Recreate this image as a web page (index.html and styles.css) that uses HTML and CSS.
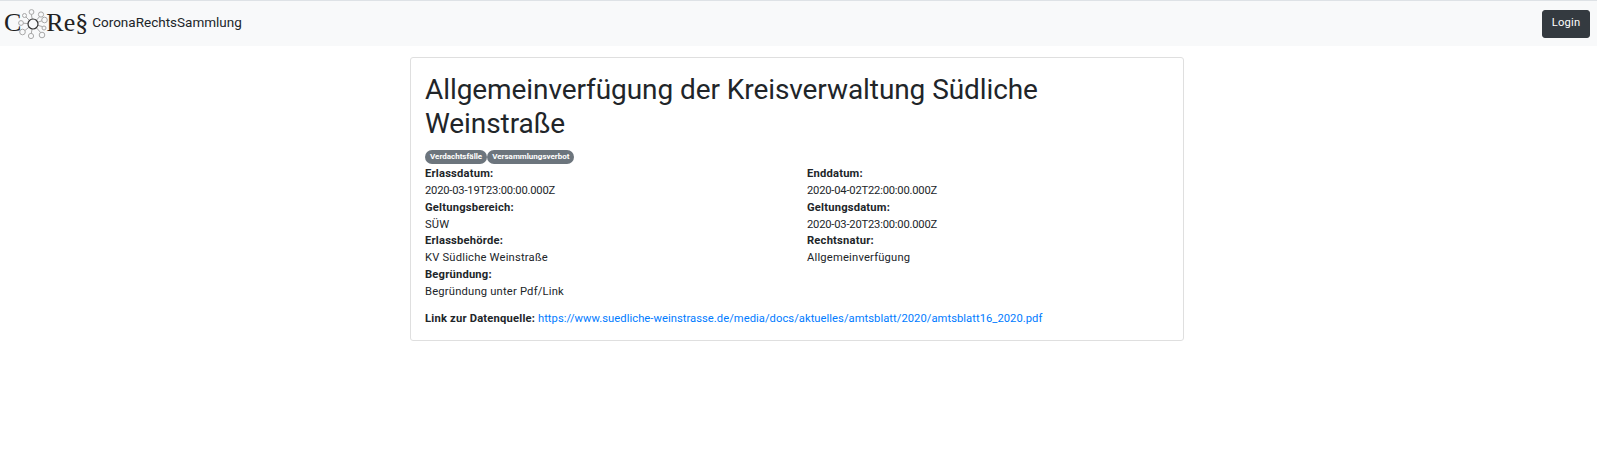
FILE: index.html
```html
<!DOCTYPE html>
<html lang="de">
<head>
<meta charset="utf-8">
<title>CoReS</title>
<link rel="stylesheet" href="styles.css">
</head>
<body>
<nav class="navbar">
  <a class="brand" href="#">
    <span class="logo">C<svg class="logo-net" viewBox="0 0 30 30" width="30" height="30" aria-hidden="true"><g fill="none" stroke="#a8a8a8" stroke-width="1"><path d="M15 15 3 14M15 15 7 7M15 15 13 3M15 15l8-9M15 15l11-4M15 15l11 3M15 15l9 10M15 15l-2 11M15 15 5 23"/><g fill="#f8f9fa"><circle cx="3" cy="14" r="2.4"/><circle cx="6.5" cy="6.5" r="2"/><circle cx="13.5" cy="3" r="2.4"/><circle cx="23" cy="5.5" r="2.6"/><circle cx="26.5" cy="11" r="2.8"/><circle cx="26" cy="19" r="2"/><circle cx="24" cy="26" r="2.8"/><circle cx="13" cy="27" r="2.6"/><circle cx="4.5" cy="23" r="2.8"/></g></g><circle cx="15" cy="15" r="5" fill="#f8f9fa" stroke="#333" stroke-width="1.2"/></svg>Re§</span>
    <span class="brand-name">CoronaRechtsSammlung</span>
  </a>
  <button class="login" type="button">Login</button>
</nav>
<main class="container">
  <article class="card">
    <h2 class="title">Allgemeinverfügung der Kreisverwaltung Südliche Weinstraße</h2>
    <div class="tags"><span class="tag">Verdachtsfälle</span><span class="tag">Versammlungsverbot</span></div>
    <div class="fields">
      <div class="field"><b>Erlassdatum:</b><span class="date">2020-03-19T23:00:00.000Z</span></div>
      <div class="field"><b>Enddatum:</b><span class="date">2020-04-02T22:00:00.000Z</span></div>
      <div class="field"><b>Geltungsbereich:</b><span>SÜW</span></div>
      <div class="field"><b>Geltungsdatum:</b><span class="date">2020-03-20T23:00:00.000Z</span></div>
      <div class="field"><b>Erlassbehörde:</b><span>KV Südliche Weinstraße</span></div>
      <div class="field"><b>Rechtsnatur:</b><span>Allgemeinverfügung</span></div>
      <div class="field"><b>Begründung:</b><span>Begründung unter Pdf/Link</span></div>
    </div>
    <p class="source"><b>Link zur Datenquelle:</b> <a href="#">https://www.suedliche-weinstrasse.de/media/docs/aktuelles/amtsblatt/2020/amtsblatt16_2020.pdf</a></p>
  </article>
</main>
</body>
</html>
```
FILE: styles.css
```css
* { box-sizing: border-box; }
body {
  margin: 0;
  background: #fff;
  color: #212529;
  font-family: Roboto, "Noto Sans", sans-serif;
  font-size: 11.2px;
  line-height: 1.5;
}
.navbar {
  height: 46px;
  border-top: 1px solid #dee2e6;
  background: #f8f9fa;
  display: flex;
  align-items: center;
  justify-content: space-between;
  padding: 0 7px 0 4px;
}
.brand {
  display: flex;
  align-items: center;
  color: #212529;
  text-decoration: none;
  margin-top: -2px;
}
.logo {
  display: flex;
  align-items: center;
  font-family: "Liberation Serif", serif;
  font-size: 26px;
  line-height: 34px;
  color: #222;
  margin-right: 4px;
}
.logo-net { margin: 3px -2px 0 -3px; }
.brand-name { font-size: 13.5px; color: #212529; }
.login {
  width: 48px;
  height: 28px;
  padding: 0;
  border: 1px solid #343a40;
  border-radius: 3px;
  background: #343a40;
  color: #fff;
  font: inherit;
  letter-spacing: 0.2px;
}
.container {
  width: 774px;
  margin: 11px 0 0 410px;
}
.card {
  height: 284px;
  border: 1px solid #dfdfdf;
  border-radius: 3px;
  padding: 15px 14px 14px;
}
.title {
  margin: 0 0 10px;
  font-size: 28px;
  font-weight: 400;
  line-height: 33.6px;
  letter-spacing: -0.08px;
}
.tags { display: flex; height: 14px; margin-top: 1px; }
.tag {
  padding: 0 5px;
  border-radius: 7px;
  background: #6c757d;
  color: #fff;
  font-size: 8px;
  font-weight: 700;
  line-height: 14px;
}
.fields {
  display: grid;
  grid-template-columns: 1fr 1fr;
  column-gap: 20px;
  margin-top: 2px;
  letter-spacing: 0.2px;
}
.field { display: flex; flex-direction: column; }
.field b, .source b { font-weight: 700; letter-spacing: 0.2px; }
.field .date { letter-spacing: -0.2px; }
.source { margin: 10px 0 0; }
.source a { color: #007bff; text-decoration: none; letter-spacing: 0.05px; }
```
